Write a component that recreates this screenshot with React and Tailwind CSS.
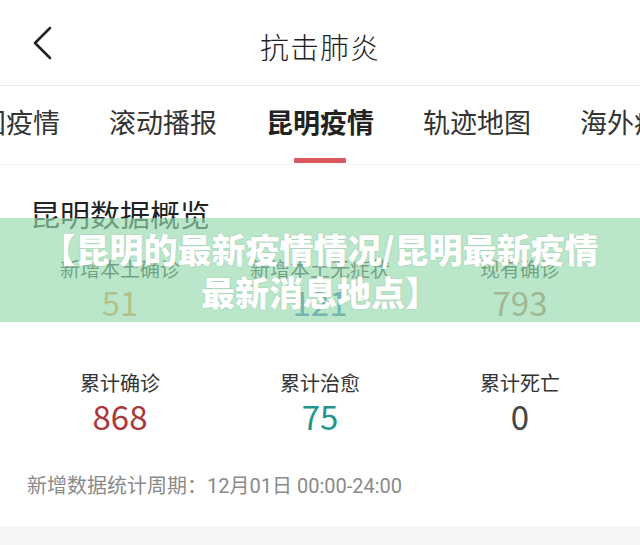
import React from "react";

const TABS = ["全国疫情", "滚动播报", "昆明疫情", "轨迹地图", "海外疫情"];
const ACTIVE = "昆明疫情";

const NEW_STATS = [
  { label: "新增本土确诊", value: "51", color: "text-[#e8923f]" },
  { label: "新增本土无症状", value: "121", color: "text-[#2f6fb5]" },
  { label: "现有确诊", value: "793", color: "text-[#b7745a]" },
];

const TOTAL_STATS = [
  { label: "累计确诊", value: "868", color: "text-[#a9373b]" },
  { label: "累计治愈", value: "75", color: "text-[#21958c]" },
  { label: "累计死亡", value: "0", color: "text-[#454545]" },
];

function StatRow({ items, className }) {
  return (
    <div className={`grid grid-cols-3 ${className}`}>
      {items.map(({ label, value, color }) => (
        <div key={label} className="flex flex-col items-center">
          <span className="text-[20px] leading-[26px] text-[#333]">{label}</span>
          <span className={`text-[33px] leading-[40px] ${color}`}>{value}</span>
        </div>
      ))}
    </div>
  );
}

export default function App() {
  return (
    <div
      className="w-[640px] h-[545px] overflow-hidden bg-white relative"
      style={{ fontFamily: '"Noto Sans CJK SC", "Noto Sans", sans-serif' }}
    >
      {/* Top bar */}
      <header className="h-[86px] grid grid-cols-[1fr_auto_1fr] items-center border-b border-[#ececec]">
        <button className="pl-[32px] justify-self-start">
          <svg width="20" height="34" viewBox="0 0 20 34" fill="none">
            <path d="M18 2 L3 17 L18 32" stroke="#222" strokeWidth="2.6" strokeLinecap="round" strokeLinejoin="round" />
          </svg>
        </button>
        <h1 className="text-[29px] font-light tracking-[1px] text-[#222] leading-none pt-[8px]">抗击肺炎</h1>
        <div />
      </header>

      {/* Channel tabs */}
      <nav className="h-[79px] overflow-hidden border-b border-[#f4f4f4]">
        <div className="flex h-full gap-[49px] ml-[-48px]">
          {TABS.map((t) => (
            <div key={t} className="relative h-full flex items-center pb-[6px] shrink-0">
              <span
                className={`text-[27px] whitespace-nowrap ${
                  t === ACTIVE ? "font-bold text-[#222]" : "text-[#333]"
                }`}
              >
                {t}
              </span>
              {t === ACTIVE && (
                <span className="absolute bottom-[1px] left-1/2 -translate-x-1/2 w-[52px] h-[5px] rounded-[1px] bg-[#d9575d]" />
              )}
            </div>
          ))}
        </div>
      </nav>

      {/* Overview */}
      <section className="relative px-[20px]">
        <h2 className="pl-[10px] pt-[30px] text-[30px] leading-[36px] text-[#222]">昆明数据概览</h2>

        <StatRow items={NEW_STATS} className="mt-[25px]" />
        <StatRow items={TOTAL_STATS} className="mt-[48px]" />

        <p
          className="pl-[7px] mt-[37px] text-[20px] leading-[26px] text-[#8a8a8a]"
          style={{ fontFamily: 'Roboto, "Noto Sans CJK SC", sans-serif' }}
        >
          新增数据统计周期：12月01日 00:00-24:00
        </p>

        {/* Headline banner */}
        <div className="absolute left-0 right-0 top-[53px] h-[104px] bg-[rgba(150,219,174,0.66)] flex items-center justify-center">
          <p className="text-center text-white font-black text-[34px] leading-[43px] whitespace-nowrap [text-shadow:0_0_2px_rgba(0,0,0,0.15)]">
            【昆明的最新疫情情况/昆明最新疫情
            <br />
            最新消息地点】
          </p>
        </div>
      </section>

      {/* Bottom strip */}
      <div className="absolute left-0 right-0 bottom-0 h-[19px] bg-[#f6f6f6]" />
    </div>
  );
}
